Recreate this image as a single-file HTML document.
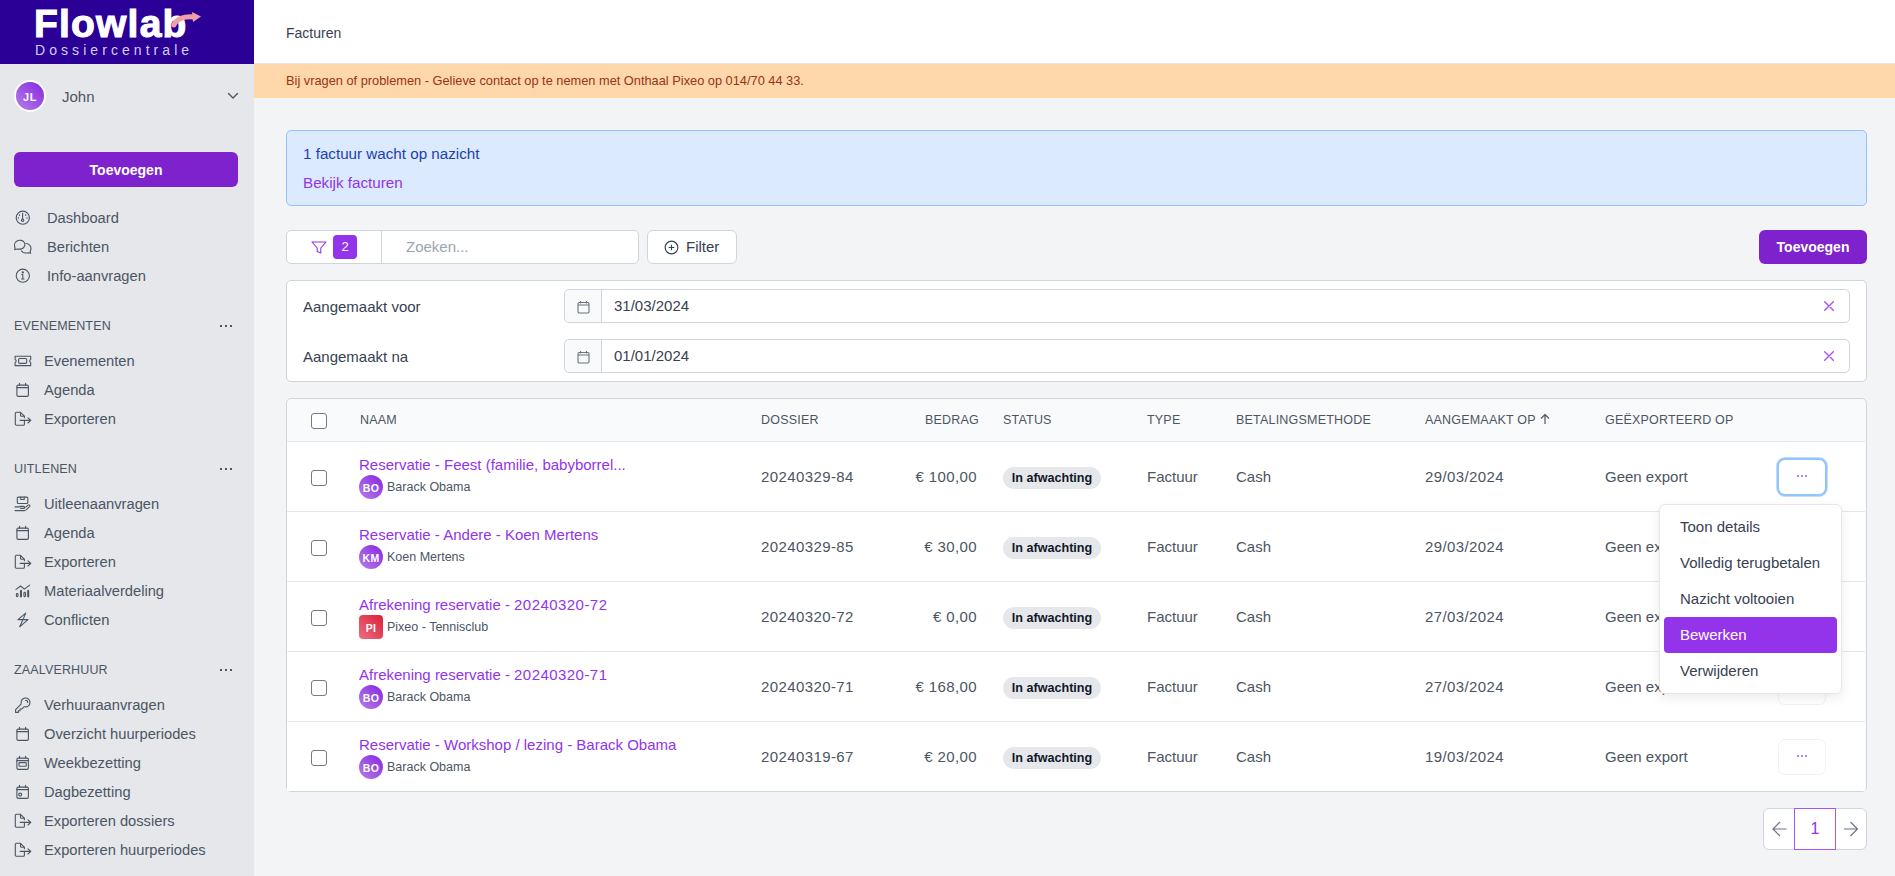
<!DOCTYPE html>
<html><head><meta charset="utf-8">
<style>
*{box-sizing:border-box;margin:0;padding:0}
html,body{width:1895px;height:876px;overflow:hidden}
body{font-family:"Liberation Sans",sans-serif;background:#f3f4f6;position:relative;color:#374151}
.abs{position:absolute}
#sb{position:absolute;left:0;top:0;width:254px;height:876px;background:#e5e7eb}
#logo{position:absolute;left:0;top:0;width:254px;height:64px;background:#2a0096}
.nav{position:absolute;left:0;width:254px;height:24px;font-size:14.7px;color:#4b5563;line-height:24px}
.nav svg{position:absolute;left:14px;top:4px;width:18px;height:16px}
.nav span{position:absolute;left:44px;top:0}
.sec{position:absolute;left:14px;font-size:12.5px;letter-spacing:0.15px;color:#4b5563;line-height:16px}
.dots{position:absolute;left:220px;width:14px;height:4px}
.dots i{position:absolute;top:0;width:2px;height:2px;background:#4b5563}
#top{position:absolute;left:254px;top:0;width:1641px;height:64px;background:#fff;border-bottom:1px solid #e5e7eb}
#banner{position:absolute;left:254px;top:64px;width:1641px;height:34px;background:#fed7aa}
.btnp{position:absolute;background:#7e22ce;color:#fff;font-weight:bold;border-radius:6px;text-align:center}
.panel{position:absolute;background:#fff;border:1px solid #d1d5db;border-radius:5px}
.lbl{position:absolute;font-size:15px;color:#374151}
.date{position:absolute;left:564px;width:1286px;height:34px;border:1px solid #d1d5db;border-radius:5px;background:#fff}
.date .ad{position:absolute;left:0;top:0;width:37px;height:32px;background:#f9fafb;border-right:1px solid #d1d5db;border-radius:5px 0 0 5px}
.date .v{position:absolute;left:49px;top:8px;font-size:15px;color:#374151;line-height:16px}
.date .x{position:absolute;left:1259px;top:11px;width:10px;height:10px}
.th{position:absolute;top:412px;font-size:12.5px;letter-spacing:0.2px;color:#4b5563;line-height:16px}
.row{position:absolute;left:287px;width:1578px;height:70px;border-top:1px solid #e5e7eb;background:#fff}
.cb{position:absolute;width:16px;height:16px;border:1.1px solid #737b87;border-radius:3px;background:#fff}
.cell{position:absolute;font-size:15px;color:#4b5563;line-height:18px}
.lnk{position:absolute;left:72px;font-size:15px;color:#9333ea;line-height:18px}
.sub{position:absolute;left:72px;height:24px}
.av{position:absolute;left:0;top:0;width:24px;height:24px;border-radius:50%;background:linear-gradient(225deg,#8526e0,#b77ee9);color:#fff;font-size:10.5px;font-weight:bold;text-align:center;line-height:26px;letter-spacing:0.3px}
.sub span{position:absolute;left:28px;top:3px;font-size:12.5px;color:#4b5563;white-space:nowrap;line-height:18px}
.badge{position:absolute;left:716px;top:25px;width:98px;height:22px;border-radius:11px;background:#e5e7eb;color:#111827;font-size:12.6px;font-weight:bold;text-align:center;line-height:22px}
.act{position:absolute;left:1492px;top:18px;width:46px;height:34px;border-radius:6px;background:#fff;box-shadow:0 0 0 1px #f1f2f4}
.act i{position:absolute;top:15px;width:2px;height:2px;border-radius:50%;background:#a855f7}

.num{letter-spacing:0.4px}
.dg{letter-spacing:0.45px}
</style></head><body>
<div id="sb">
<div id="logo">
<div class="abs" style="left:34px;top:4px;font-size:39px;font-weight:bold;color:#fff;letter-spacing:1.2px;line-height:40px;-webkit-text-stroke:1.1px #fff">Flowlab</div>
<svg class="abs" style="left:170px;top:12px" width="32" height="18" viewBox="0 0 32 18"><path d="M4 13 C6 7 14 4 24 5" stroke="#f0a0a8" stroke-width="5" fill="none" stroke-linecap="round"/><path d="M22 0 L31 4.5 L23 10 Z" fill="#f0a0a8"/></svg>
<div class="abs" style="left:35px;top:42px;font-size:14px;color:#d8cdf0;letter-spacing:4.06px;line-height:16px">Dossiercentrale</div>
</div>
<div class="abs" style="left:14px;top:80px;width:32px;height:32px;border-radius:50%;background:#fff"></div>
<div class="abs" style="left:16px;top:82px;width:28px;height:28px;border-radius:50%;background:linear-gradient(225deg,#8526e0,#b77ee9);color:#fff;font-size:11px;font-weight:bold;letter-spacing:0.5px;text-align:center;line-height:30px">JL</div>
<div class="abs" style="left:62px;top:88px;font-size:15px;color:#4b5563;line-height:18px">John</div>
<svg class="abs" style="left:227px;top:92px" width="12" height="8" viewBox="0 0 12 8"><path d="M1.5 1.5L6 6l4.5-4.5" stroke="#4b5563" stroke-width="1.4" fill="none" stroke-linecap="round" stroke-linejoin="round"/></svg>
<div class="btnp" style="left:14px;top:152px;width:224px;height:35px;line-height:37px;font-size:14px">Toevoegen</div>
<div class="nav" style="top:206px"><svg viewBox="0 0 18 16" fill="none" stroke="#4b5563" stroke-width="1.1" stroke-linecap="round" stroke-linejoin="round"><circle cx="8.8" cy="7.7" r="6.6"/><path d="M8.6 3.2v5.6"/><circle cx="8.6" cy="10.2" r="1.2"/><path d="M5.5 5v.3M11.7 5v.3M4.3 8h.1M13 8h.1" stroke-width="1.3"/></svg><span style="left:47px">Dashboard</span></div>
<div class="nav" style="top:235px"><svg viewBox="0 0 18 16" fill="none" stroke="#4b5563" stroke-width="1.1" stroke-linecap="round" stroke-linejoin="round"><path d="M0.6 10.6c0.4-.5.6-1.3.3-2.2C0 6 .8 3 3 1.9 5.6.6 9.3 1.2 10.5 3.9c1.1 2.5-.4 5.3-3 6-2 .5-4 .1-4.8.3-.9.2-1.6.4-2.1.4z"/><path d="M12 4.3c2.6.4 5.2 2.5 5 5.3-.1 1.2-.6 2-.8 2.6-.1.6.2 1.4.5 2.1-.8 0-1.6-.5-2.4-.6-2.3.6-5.8.3-6.9-1.9"/></svg><span style="left:47px">Berichten</span></div>
<div class="nav" style="top:264px"><svg viewBox="0 0 18 16" fill="none" stroke="#4b5563" stroke-width="1.1" stroke-linecap="round" stroke-linejoin="round"><circle cx="8.8" cy="7.7" r="6.6"/><path d="M8.8 6.5v4.5M7.6 11h2.4M7.8 6.5h1"/><circle cx="8.8" cy="4.4" r=".55" fill="#4b5563"/></svg><span style="left:47px">Info-aanvragen</span></div>
<div class="sec" style="top:318px">EVENEMENTEN</div>
<div class="dots" style="top:325px"><i style="left:0"></i><i style="left:5px"></i><i style="left:10px"></i></div>
<div class="nav" style="top:349px"><svg viewBox="0 0 18 16" fill="none" stroke="#4b5563" stroke-width="1.1" stroke-linecap="round" stroke-linejoin="round"><path d="M1.1 3.2h15.6v3.3a1.6 1.6 0 0 0 0 3v3.1H1.1V9.5a1.6 1.6 0 0 0 0-3z"/><rect x="4.6" y="5.5" width="8.1" height="4.9" rx="1.2"/></svg><span>Evenementen</span></div>
<div class="nav" style="top:378px"><svg viewBox="0 0 18 16" fill="none" stroke="#4b5563" stroke-width="1.1" stroke-linecap="round" stroke-linejoin="round"><rect x="2.9" y="3.1" width="11.5" height="11.3" rx="1.3"/><path d="M2.9 5.6h11.5M5.5 1.2v1.9M11.6 1.2v1.9"/></svg><span>Agenda</span></div>
<div class="nav" style="top:407px"><svg viewBox="0 0 18 16" fill="none" stroke="#4b5563" stroke-width="1.1" stroke-linecap="round" stroke-linejoin="round"><path d="M10.4 9.4v3.8a1 1 0 0 1-1 1H2.3a1 1 0 0 1-1-1V2.3a1 1 0 0 1 1-1h4.2l3.9 3.9v1.6M6.5 1.3v2.9a1 1 0 0 0 1 1h2.9"/><path d="M6.2 9.4h10.6M14 6.8l2.8 2.6L14 12"/></svg><span>Exporteren</span></div>
<div class="sec" style="top:461px">UITLENEN</div>
<div class="dots" style="top:468px"><i style="left:0"></i><i style="left:5px"></i><i style="left:10px"></i></div>
<div class="nav" style="top:492px"><svg viewBox="0 0 18 16" fill="none" stroke="#4b5563" stroke-width="1.1" stroke-linecap="round" stroke-linejoin="round"><rect x="3.3" y="1.1" width="10.5" height="6.4" rx="1"/><path d="M6.8 1.1v2.4h3.4V1.1"/><path d="M1 10.9h3.2c.9 0 1.7-.5 2.4-.5h3c.7 0 1 .5 1 1s-.5 1-1 1H6.5"/><path d="M1 14.6h9.3c.7 0 1.3-.3 1.8-.7l3.4-3.2c.5-.5.6-1.2.1-1.6-.4-.4-1-.4-1.5 0l-2.4 2"/></svg><span>Uitleenaanvragen</span></div>
<div class="nav" style="top:521px"><svg viewBox="0 0 18 16" fill="none" stroke="#4b5563" stroke-width="1.1" stroke-linecap="round" stroke-linejoin="round"><rect x="2.9" y="3.1" width="11.5" height="11.3" rx="1.3"/><path d="M2.9 5.6h11.5M5.5 1.2v1.9M11.6 1.2v1.9"/></svg><span>Agenda</span></div>
<div class="nav" style="top:550px"><svg viewBox="0 0 18 16" fill="none" stroke="#4b5563" stroke-width="1.1" stroke-linecap="round" stroke-linejoin="round"><path d="M10.4 9.4v3.8a1 1 0 0 1-1 1H2.3a1 1 0 0 1-1-1V2.3a1 1 0 0 1 1-1h4.2l3.9 3.9v1.6M6.5 1.3v2.9a1 1 0 0 0 1 1h2.9"/><path d="M6.2 9.4h10.6M14 6.8l2.8 2.6L14 12"/></svg><span>Exporteren</span></div>
<div class="nav" style="top:579px"><svg viewBox="0 0 18 16" fill="none" stroke="#4b5563" stroke-width="1.1" stroke-linecap="round" stroke-linejoin="round"><path d="M2 6.4l4.6-3.4 3.7 3.1 5.4-4"/><rect x="2.4" y="10.6" width="1.6" height="3" rx=".8"/><path d="M7 7.8v5.8M14.2 7.8v5.8" stroke-width="2"/><rect x="9.9" y="9.4" width="1.6" height="4.2" rx=".8"/></svg><span>Materiaalverdeling</span></div>
<div class="nav" style="top:608px"><svg viewBox="0 0 18 16" fill="none" stroke="#4b5563" stroke-width="1.1" stroke-linecap="round" stroke-linejoin="round"><path d="M11.7 1.1L4 7.6h5L5.7 14.8l8.3-7.2H9z"/></svg><span>Conflicten</span></div>
<div class="sec" style="top:662px">ZAALVERHUUR</div>
<div class="dots" style="top:669px"><i style="left:0"></i><i style="left:5px"></i><i style="left:10px"></i></div>
<div class="nav" style="top:693px"><svg viewBox="0 0 18 16" fill="none" stroke="#4b5563" stroke-width="1.1" stroke-linecap="round" stroke-linejoin="round"><g transform="translate(-0.1,-0.7) scale(0.74)" stroke-width="1.5"><path d="M15.75 5.25a3 3 0 0 1 3 3m3 0a6 6 0 0 1-7.029 5.912c-.563-.097-1.159.026-1.563.43L10.5 17.25H8.25v2.25H6v2.25H2.25v-2.818c0-.597.237-1.17.659-1.591l6.499-6.499c.404-.404.527-1 .43-1.563A6 6 0 1 1 21.75 8.25Z"/></g></svg><span>Verhuuraanvragen</span></div>
<div class="nav" style="top:722px"><svg viewBox="0 0 18 16" fill="none" stroke="#4b5563" stroke-width="1.1" stroke-linecap="round" stroke-linejoin="round"><rect x="2.9" y="3.1" width="11.5" height="11.3" rx="1.3"/><path d="M2.9 5.6h11.5M5.5 1.2v1.9M11.6 1.2v1.9"/></svg><span>Overzicht huurperiodes</span></div>
<div class="nav" style="top:751px"><svg viewBox="0 0 18 16" fill="none" stroke="#4b5563" stroke-width="1.1" stroke-linecap="round" stroke-linejoin="round"><rect x="2.9" y="3.1" width="11.5" height="11.3" rx="1.3"/><path d="M2.9 5.6h11.5M5.5 1.2v1.9M11.6 1.2v1.9"/><rect x="5" y="7.6" width="7.3" height="3.6" rx=".8"/></svg><span>Weekbezetting</span></div>
<div class="nav" style="top:780px"><svg viewBox="0 0 18 16" fill="none" stroke="#4b5563" stroke-width="1.1" stroke-linecap="round" stroke-linejoin="round"><rect x="2.9" y="3.1" width="11.5" height="11.3" rx="1.3"/><path d="M2.9 5.6h11.5M5.5 1.2v1.9M11.6 1.2v1.9"/><circle cx="6.2" cy="10.6" r="1.5"/></svg><span>Dagbezetting</span></div>
<div class="nav" style="top:809px"><svg viewBox="0 0 18 16" fill="none" stroke="#4b5563" stroke-width="1.1" stroke-linecap="round" stroke-linejoin="round"><path d="M10.4 9.4v3.8a1 1 0 0 1-1 1H2.3a1 1 0 0 1-1-1V2.3a1 1 0 0 1 1-1h4.2l3.9 3.9v1.6M6.5 1.3v2.9a1 1 0 0 0 1 1h2.9"/><path d="M6.2 9.4h10.6M14 6.8l2.8 2.6L14 12"/></svg><span>Exporteren dossiers</span></div>
<div class="nav" style="top:838px"><svg viewBox="0 0 18 16" fill="none" stroke="#4b5563" stroke-width="1.1" stroke-linecap="round" stroke-linejoin="round"><path d="M10.4 9.4v3.8a1 1 0 0 1-1 1H2.3a1 1 0 0 1-1-1V2.3a1 1 0 0 1 1-1h4.2l3.9 3.9v1.6M6.5 1.3v2.9a1 1 0 0 0 1 1h2.9"/><path d="M6.2 9.4h10.6M14 6.8l2.8 2.6L14 12"/></svg><span>Exporteren huurperiodes</span></div>
</div>
<div id="top"><div class="abs" style="left:32px;top:24px;font-size:14px;color:#374151;line-height:18px">Facturen</div></div>
<div id="banner"><div class="abs" style="left:32px;top:9px;font-size:12.8px;color:#9a3412;line-height:16px">Bij vragen of problemen - Gelieve contact op te nemen met Onthaal Pixeo op 014/70 44 33.</div></div>
<div class="abs" style="left:286px;top:130px;width:1581px;height:76px;background:#dbeafe;border:1px solid #93c5fd;border-radius:5px">
<div class="abs" style="left:16px;top:14px;font-size:15.2px;color:#1e40af;line-height:18px">1 factuur wacht op nazicht</div>
<div class="abs" style="left:16px;top:43px;font-size:15.2px;color:#9333ea;line-height:18px">Bekijk facturen</div>
</div>
<div class="abs" style="left:286px;top:230px;width:353px;height:34px;background:#fff;border:1px solid #d1d5db;border-radius:5px">
<div class="abs" style="left:94px;top:0;width:1px;height:32px;background:#d1d5db"></div>
<svg class="abs" style="left:24px;top:10px" width="16" height="13" viewBox="0 0 16 13"><path d="M1 1h14L9.8 7v5L6.2 10.5V7z" stroke="#9333ea" stroke-width="1.1" fill="none" stroke-linejoin="round"/></svg>
<div class="abs" style="left:46px;top:4px;width:24px;height:24px;border-radius:4px;background:#9333ea;color:#fff;font-size:13px;text-align:center;line-height:24px">2</div>
<div class="abs" style="left:119px;top:7px;font-size:15px;color:#9ca3af;line-height:18px">Zoeken...</div>
</div>
<div class="abs" style="left:647px;top:230px;width:90px;height:34px;background:#fff;border:1px solid #d1d5db;border-radius:6px">
<svg class="abs" style="left:16px;top:9px" width="15" height="15" viewBox="0 0 16 16"><circle cx="8" cy="8" r="6.8" stroke="#374151" stroke-width="1.2" fill="none"/><path d="M8 5v6M5 8h6" stroke="#374151" stroke-width="1.2"/></svg>
<div class="abs" style="left:38px;top:7px;font-size:15px;color:#374151;line-height:18px">Filter</div>
</div>
<div class="btnp" style="left:1759px;top:230px;width:108px;height:34px;line-height:34px;font-size:14px">Toevoegen</div>
<div class="panel" style="left:286px;top:280px;width:1581px;height:102px"></div>
<div class="lbl" style="left:303px;top:298px;line-height:18px">Aangemaakt voor</div>
<div class="date" style="top:289px"><div class="ad"><svg class="abs" style="left:12px;top:10px" width="13" height="14" viewBox="0 0 13 14"><rect x="1" y="2.5" width="11" height="10.5" rx="1.2" stroke="#6b7280" stroke-width="1.1" fill="none"/><path d="M1 5h11M3.5 1v2.5M9.5 1v2.5" stroke="#6b7280" stroke-width="1.1"/></svg></div><div class="v">31/03/2024</div><svg class="x" viewBox="0 0 10 10"><path d="M.7 .7l8.6 8.6M9.3 .7L.7 9.3" stroke="#a855f7" stroke-width="1.4" stroke-linecap="round"/></svg></div>
<div class="lbl" style="left:303px;top:348px;line-height:18px">Aangemaakt na</div>
<div class="date" style="top:339px"><div class="ad"><svg class="abs" style="left:12px;top:10px" width="13" height="14" viewBox="0 0 13 14"><rect x="1" y="2.5" width="11" height="10.5" rx="1.2" stroke="#6b7280" stroke-width="1.1" fill="none"/><path d="M1 5h11M3.5 1v2.5M9.5 1v2.5" stroke="#6b7280" stroke-width="1.1"/></svg></div><div class="v">01/01/2024</div><svg class="x" viewBox="0 0 10 10"><path d="M.7 .7l8.6 8.6M9.3 .7L.7 9.3" stroke="#a855f7" stroke-width="1.4" stroke-linecap="round"/></svg></div>
<div class="panel" style="left:286px;top:398px;width:1581px;height:394px;background:#f9fafb;overflow:hidden"></div>
<div class="cb" style="left:311px;top:413px"></div>
<div class="th" style="left:360px">NAAM</div>
<div class="th" style="left:761px">DOSSIER</div>
<div class="th" style="left:1003px">STATUS</div>
<div class="th" style="left:1147px">TYPE</div>
<div class="th" style="left:1236px">BETALINGSMETHODE</div>
<div class="th" style="left:1425px">AANGEMAAKT OP</div>
<div class="th" style="left:1605px">GE&Euml;XPORTEERD OP</div>
<div class="th" style="left:925px;width:52px;text-align:right">BEDRAG</div>
<svg class="abs" style="left:1540px;top:413px" width="10" height="12" viewBox="0 0 10 12"><path d="M5 11V1.5M1 5.5L5 1.5l4 4" stroke="#4b5563" stroke-width="1.2" fill="none"/></svg>
<div class="row" style="top:441px"><div class="cb" style="left:24px;top:28px"></div><div class="lnk" style="top:14px">Reservatie - Feest (familie, babyborrel...</div><div class="sub" style="top:33px"><div class="av" style="">BO</div><span>Barack Obama</span></div><div class="cell num" style="left:474px;top:26px">20240329-84</div><div class="cell num" style="left:590px;top:26px;width:100px;text-align:right">&euro; 100,00</div><div class="badge">In afwachting</div><div class="cell" style="left:860px;top:26px">Factuur</div><div class="cell" style="left:949px;top:26px">Cash</div><div class="cell num" style="left:1138px;top:26px">29/03/2024</div><div class="cell" style="left:1318px;top:26px">Geen export</div><div class="act" style="box-shadow:0 0 0 2px #93c5fd,0 0 0 3px #bfdbfe"><i style="left:18px"></i><i style="left:22px"></i><i style="left:26px"></i></div></div>
<div class="row" style="top:511px"><div class="cb" style="left:24px;top:28px"></div><div class="lnk" style="top:14px">Reservatie - Andere - Koen Mertens</div><div class="sub" style="top:33px"><div class="av" style="">KM</div><span>Koen Mertens</span></div><div class="cell num" style="left:474px;top:26px">20240329-85</div><div class="cell num" style="left:590px;top:26px;width:100px;text-align:right">&euro; 30,00</div><div class="badge">In afwachting</div><div class="cell" style="left:860px;top:26px">Factuur</div><div class="cell" style="left:949px;top:26px">Cash</div><div class="cell num" style="left:1138px;top:26px">29/03/2024</div><div class="cell" style="left:1318px;top:26px">Geen export</div><div class="act"><i style="left:18px"></i><i style="left:22px"></i><i style="left:26px"></i></div></div>
<div class="row" style="top:581px"><div class="cb" style="left:24px;top:28px"></div><div class="lnk" style="top:14px">Afrekening reservatie - <span class="dg">20240320-72</span></div><div class="sub" style="top:33px"><div class="av" style="border-radius:4px;background:linear-gradient(225deg,#dc1f3a,#ec6f7e)">PI</div><span>Pixeo - Tennisclub</span></div><div class="cell num" style="left:474px;top:26px">20240320-72</div><div class="cell num" style="left:590px;top:26px;width:100px;text-align:right">&euro; 0,00</div><div class="badge">In afwachting</div><div class="cell" style="left:860px;top:26px">Factuur</div><div class="cell" style="left:949px;top:26px">Cash</div><div class="cell num" style="left:1138px;top:26px">27/03/2024</div><div class="cell" style="left:1318px;top:26px">Geen export</div><div class="act"><i style="left:18px"></i><i style="left:22px"></i><i style="left:26px"></i></div></div>
<div class="row" style="top:651px"><div class="cb" style="left:24px;top:28px"></div><div class="lnk" style="top:14px">Afrekening reservatie - <span class="dg">20240320-71</span></div><div class="sub" style="top:33px"><div class="av" style="">BO</div><span>Barack Obama</span></div><div class="cell num" style="left:474px;top:26px">20240320-71</div><div class="cell num" style="left:590px;top:26px;width:100px;text-align:right">&euro; 168,00</div><div class="badge">In afwachting</div><div class="cell" style="left:860px;top:26px">Factuur</div><div class="cell" style="left:949px;top:26px">Cash</div><div class="cell num" style="left:1138px;top:26px">27/03/2024</div><div class="cell" style="left:1318px;top:26px">Geen export</div><div class="act"><i style="left:18px"></i><i style="left:22px"></i><i style="left:26px"></i></div></div>
<div class="row" style="top:721px"><div class="cb" style="left:24px;top:28px"></div><div class="lnk" style="top:14px">Reservatie - Workshop / lezing - Barack Obama</div><div class="sub" style="top:33px"><div class="av" style="">BO</div><span>Barack Obama</span></div><div class="cell num" style="left:474px;top:26px">20240319-67</div><div class="cell num" style="left:590px;top:26px;width:100px;text-align:right">&euro; 20,00</div><div class="badge">In afwachting</div><div class="cell" style="left:860px;top:26px">Factuur</div><div class="cell" style="left:949px;top:26px">Cash</div><div class="cell num" style="left:1138px;top:26px">19/03/2024</div><div class="cell" style="left:1318px;top:26px">Geen export</div><div class="act"><i style="left:18px"></i><i style="left:22px"></i><i style="left:26px"></i></div></div>
<div class="abs" style="left:1659px;top:504px;width:183px;height:190px;background:#fff;border:1px solid #e5e7eb;border-radius:6px;box-shadow:0 4px 12px rgba(0,0,0,0.08)">
<div class="abs" style="left:4px;top:112px;width:173px;height:36px;background:#9333ea;border-radius:4px"></div>
<div class="abs" style="left:20px;top:13px;font-size:15px;color:#374151;line-height:18px">Toon details</div>
<div class="abs" style="left:20px;top:49px;font-size:15px;color:#374151;line-height:18px">Volledig terugbetalen</div>
<div class="abs" style="left:20px;top:85px;font-size:15px;color:#374151;line-height:18px">Nazicht voltooien</div>
<div class="abs" style="left:20px;top:121px;font-size:15px;color:#fff;line-height:18px">Bewerken</div>
<div class="abs" style="left:20px;top:157px;font-size:15px;color:#374151;line-height:18px">Verwijderen</div>
</div>
<div class="abs" style="left:1763px;top:808px;width:104px;height:42px;background:#fff;border:1px solid #d1d5db;border-radius:6px"></div>
<div class="abs" style="left:1794px;top:808px;width:42px;height:42px;border:1px solid #a855f7;background:#fff;color:#9333ea;font-size:16px;text-align:center;line-height:40px">1</div>
<svg class="abs" style="left:1772px;top:821px" width="16" height="16" viewBox="0 0 16 16"><path d="M14.5 8H1M8 1L1 8l7 7" stroke="#6b7280" stroke-width="1.15" fill="none"/></svg>
<svg class="abs" style="left:1843px;top:821px" width="16" height="16" viewBox="0 0 16 16"><path d="M1 8h13.5M7.5 1l7 7-7 7" stroke="#6b7280" stroke-width="1.15" fill="none"/></svg>
</body></html>
